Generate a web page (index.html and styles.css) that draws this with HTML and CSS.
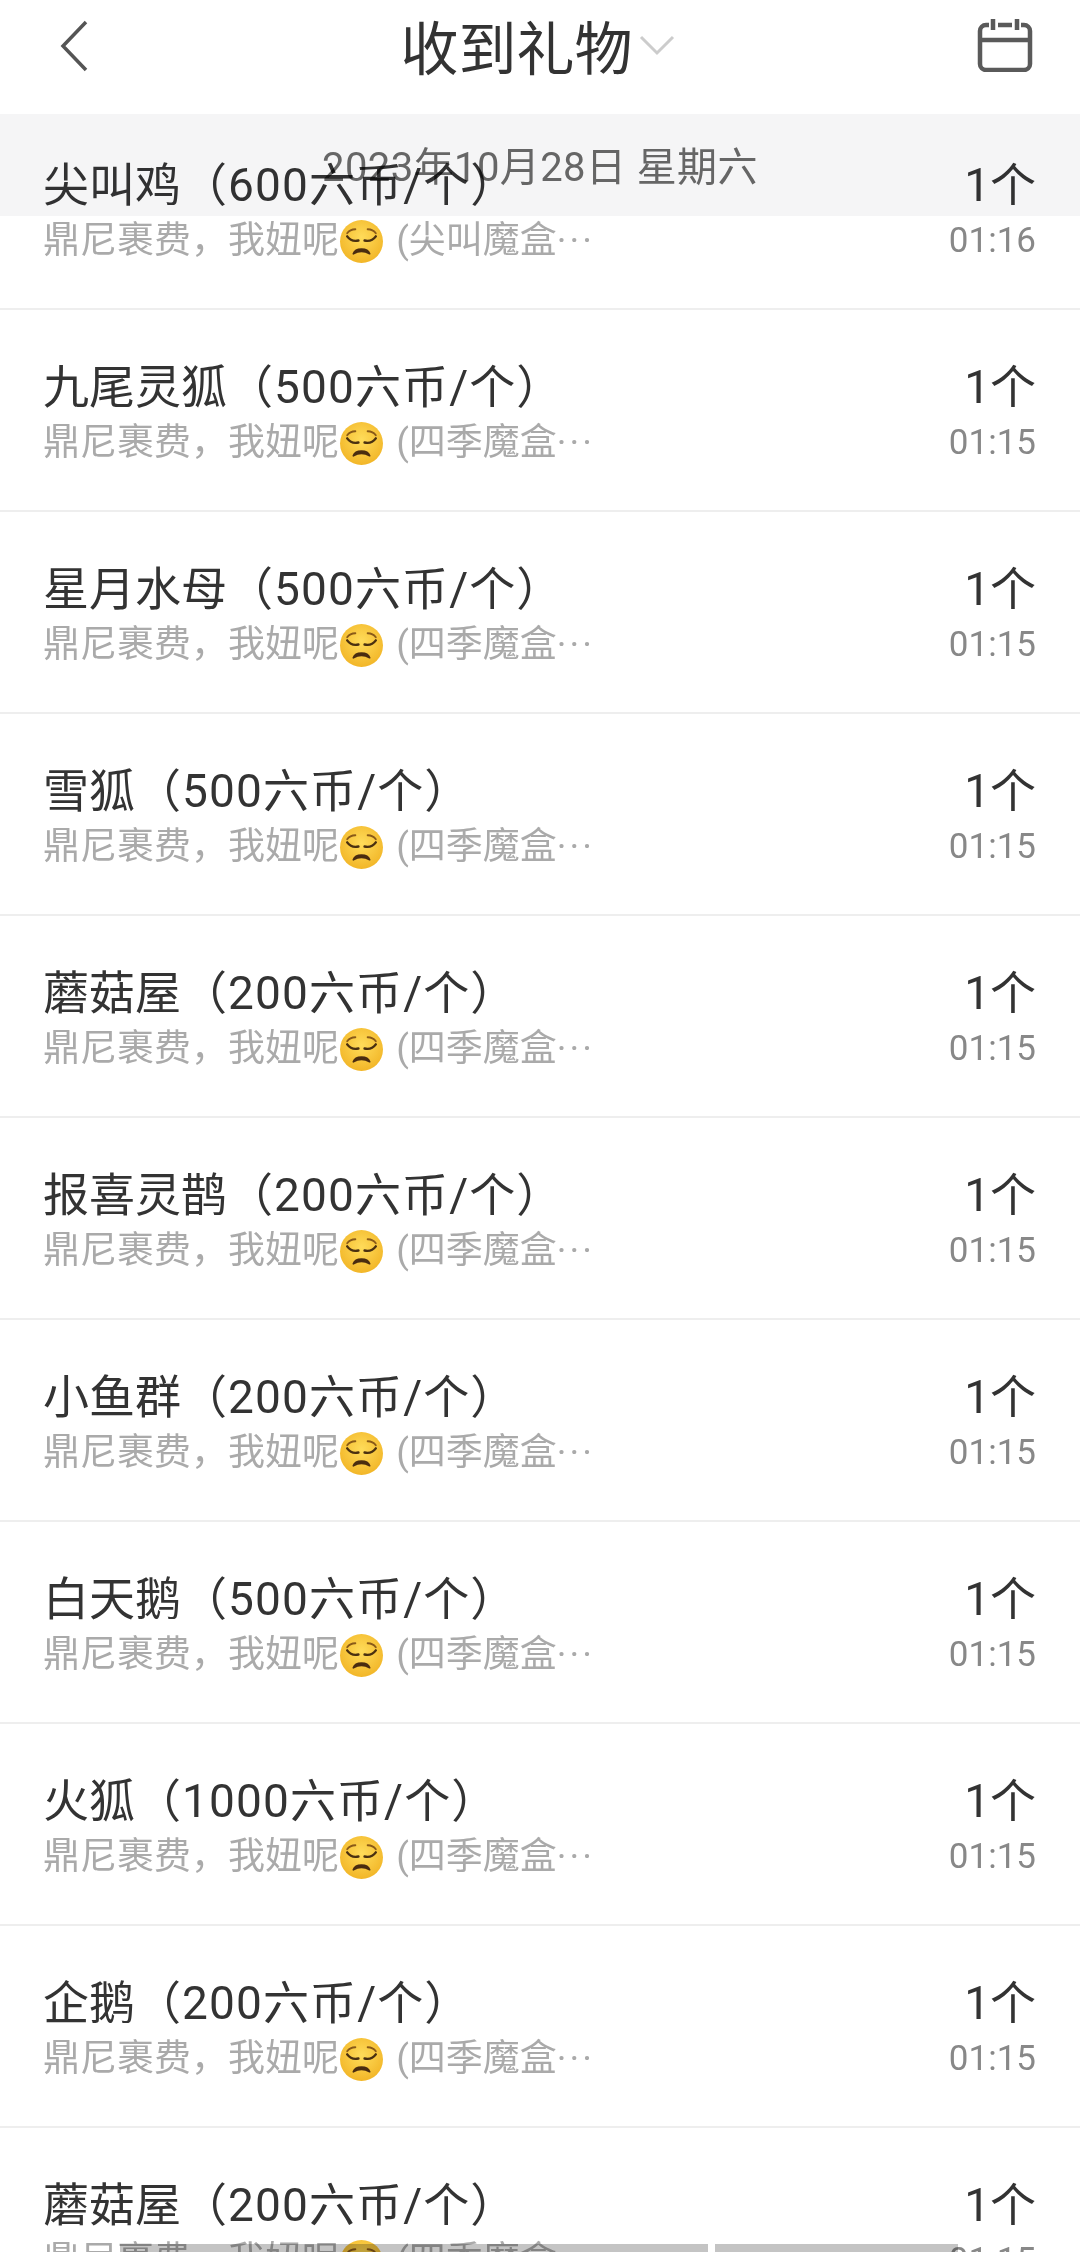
FILE: index.html
```html
<!DOCTYPE html>
<html lang="zh-CN">
<head>
    <meta charset="UTF-8">
    <meta name="viewport" content="width=device-width, initial-scale=1.0">
    <title>收到礼物</title>
    <link rel="stylesheet" href="styles.css">
</head>
<body>

<svg class="defs" width="0" height="0">
    <defs>
        <radialGradient id="faceFill" cx="50%" cy="40%" r="60%">
            <stop offset="0%" stop-color="#ffdc5a"/>
            <stop offset="100%" stop-color="#f2b628"/>
        </radialGradient>
        <symbol id="face" viewBox="0 0 44 44">
            <circle cx="22" cy="22" r="21" fill="url(#faceFill)"/>
            <path d="M8 14c2-3 5-4 8-4M36 14c-2-3-5-4-8-4" fill="none" stroke="#8a5a18" stroke-width="1.8" stroke-linecap="round"/>
            <path d="M8 17c3 4 7 5 11 4M36 17c-3 4-7 5-11 4" fill="none" stroke="#4a3010" stroke-width="2.4" stroke-linecap="round"/>
            <path d="M14 34c2-6 14-6 16 0c-5-3-11-3-16 0z" fill="#4a2c10" stroke="#4a2c10" stroke-width="1.6" stroke-linejoin="round"/>
        </symbol>
    </defs>
</svg>

<div class="page">
    <div class="header">
        <svg class="back" width="28" height="52" viewBox="0 0 28 52">
            <path d="M26 2L3 26l23 24" fill="none" stroke="#555" stroke-width="3.5"/>
        </svg>
        <div class="title">
            <span>收到礼物</span>
            <svg width="36" height="22" viewBox="0 0 36 22">
                <path d="M2 3l16 16L34 3" fill="none" stroke="#ccc" stroke-width="3"/>
            </svg>
        </div>
        <svg class="calendar" width="56" height="54" viewBox="0 0 56 54">
            <path d="M12 7H9a6 6 0 0 0-6 6v33a6 6 0 0 0 6 6h38a6 6 0 0 0 6-6V13a6 6 0 0 0-6-6h-3M21 7h14M3 22h50M16 1v11M40 1v11" fill="none" stroke="#5a5a5a" stroke-width="4.5"/>
        </svg>
    </div>

    <div class="date-band">2023年10月28日 星期六</div>

    <div class="list">
        <div class="row">
            <div class="info">
                <div class="name">尖叫鸡<span class="price">（600六币/个）</span></div>
                <div class="desc">鼎尼裹费，我妞呢<svg class="emoji"><use href="#face"/></svg> (尖叫魔盒<span class="dots">···</span></div>
            </div>
            <div class="meta">
                <div class="count">1个</div>
                <div class="time">01:16</div>
            </div>
        </div>
        <div class="row">
            <div class="info">
                <div class="name">九尾灵狐<span class="price">（500六币/个）</span></div>
                <div class="desc">鼎尼裹费，我妞呢<svg class="emoji"><use href="#face"/></svg> (四季魔盒<span class="dots">···</span></div>
            </div>
            <div class="meta">
                <div class="count">1个</div>
                <div class="time">01:15</div>
            </div>
        </div>
        <div class="row">
            <div class="info">
                <div class="name">星月水母<span class="price">（500六币/个）</span></div>
                <div class="desc">鼎尼裹费，我妞呢<svg class="emoji"><use href="#face"/></svg> (四季魔盒<span class="dots">···</span></div>
            </div>
            <div class="meta">
                <div class="count">1个</div>
                <div class="time">01:15</div>
            </div>
        </div>
        <div class="row">
            <div class="info">
                <div class="name">雪狐<span class="price">（500六币/个）</span></div>
                <div class="desc">鼎尼裹费，我妞呢<svg class="emoji"><use href="#face"/></svg> (四季魔盒<span class="dots">···</span></div>
            </div>
            <div class="meta">
                <div class="count">1个</div>
                <div class="time">01:15</div>
            </div>
        </div>
        <div class="row">
            <div class="info">
                <div class="name">蘑菇屋<span class="price">（200六币/个）</span></div>
                <div class="desc">鼎尼裹费，我妞呢<svg class="emoji"><use href="#face"/></svg> (四季魔盒<span class="dots">···</span></div>
            </div>
            <div class="meta">
                <div class="count">1个</div>
                <div class="time">01:15</div>
            </div>
        </div>
        <div class="row">
            <div class="info">
                <div class="name">报喜灵鹊<span class="price">（200六币/个）</span></div>
                <div class="desc">鼎尼裹费，我妞呢<svg class="emoji"><use href="#face"/></svg> (四季魔盒<span class="dots">···</span></div>
            </div>
            <div class="meta">
                <div class="count">1个</div>
                <div class="time">01:15</div>
            </div>
        </div>
        <div class="row">
            <div class="info">
                <div class="name">小鱼群<span class="price">（200六币/个）</span></div>
                <div class="desc">鼎尼裹费，我妞呢<svg class="emoji"><use href="#face"/></svg> (四季魔盒<span class="dots">···</span></div>
            </div>
            <div class="meta">
                <div class="count">1个</div>
                <div class="time">01:15</div>
            </div>
        </div>
        <div class="row">
            <div class="info">
                <div class="name">白天鹅<span class="price">（500六币/个）</span></div>
                <div class="desc">鼎尼裹费，我妞呢<svg class="emoji"><use href="#face"/></svg> (四季魔盒<span class="dots">···</span></div>
            </div>
            <div class="meta">
                <div class="count">1个</div>
                <div class="time">01:15</div>
            </div>
        </div>
        <div class="row">
            <div class="info">
                <div class="name">火狐<span class="price">（1000六币/个）</span></div>
                <div class="desc">鼎尼裹费，我妞呢<svg class="emoji"><use href="#face"/></svg> (四季魔盒<span class="dots">···</span></div>
            </div>
            <div class="meta">
                <div class="count">1个</div>
                <div class="time">01:15</div>
            </div>
        </div>
        <div class="row">
            <div class="info">
                <div class="name">企鹅<span class="price">（200六币/个）</span></div>
                <div class="desc">鼎尼裹费，我妞呢<svg class="emoji"><use href="#face"/></svg> (四季魔盒<span class="dots">···</span></div>
            </div>
            <div class="meta">
                <div class="count">1个</div>
                <div class="time">01:15</div>
            </div>
        </div>
        <div class="row">
            <div class="info">
                <div class="name">蘑菇屋<span class="price">（200六币/个）</span></div>
                <div class="desc">鼎尼裹费，我妞呢<svg class="emoji"><use href="#face"/></svg> (四季魔盒<span class="dots">···</span></div>
            </div>
            <div class="meta">
                <div class="count">1个</div>
                <div class="time">01:15</div>
            </div>
        </div>
    </div>

    <div class="crop-bars">
        <div class="crop-bar long"></div>
        <div class="crop-bar short"></div>
    </div>
</div>

</body>
</html>
```

FILE: styles.css
```css
html, body {
    margin: 0;
    padding: 0;
    background: white;
}
body {
    font-family: Roboto, "Noto Sans CJK SC", sans-serif;
    color: #333;
}
.defs {
    position: absolute;
}
.page {
    position: relative;
    width: 1080px;
    height: 2252px;
    overflow: hidden;
    background: white;
}
.header {
    position: relative;
    z-index: 1;
    height: 114px;
    padding: 0 47px 0 60px;
    box-sizing: border-box;
    display: flex;
    justify-content: space-between;
    align-items: flex-start;
    background: white;
}
.back {
    margin-top: 20px;
}
.calendar {
    margin-top: 18px;
}
.title {
    display: flex;
    align-items: center;
    gap: 6px;
    height: 90px;
    font-size: 58px;
    color: #333;
    margin-left: 10px;
}
.date-band {
    position: absolute;
    z-index: 2;
    left: 0;
    right: 0;
    top: 114px;
    height: 102px;
    padding-top: 27px;
    box-sizing: border-box;
    text-align: center;
    font-size: 40px;
    letter-spacing: 0.4px;
    line-height: 54px;
    color: #666;
    background: #f5f5f6;
    mix-blend-mode: multiply;
}
.list {
    margin-top: -6px;
}
.row {
    height: 202px;
    box-sizing: border-box;
    padding: 46px 44px 0 43px;
    display: flex;
    justify-content: space-between;
    border-bottom: 2px solid #eee;
}
.name {
    font-size: 46px;
    line-height: 62px;
}
.price {
    letter-spacing: 1.1px;
}
.desc {
    display: flex;
    align-items: center;
    font-size: 37px;
    line-height: 50px;
    color: #aaa;
    white-space: pre;
}
.emoji {
    width: 45px;
    height: 45px;
    flex: none;
    margin-right: 3px;
}
.dots {
    letter-spacing: 3px;
}
.meta {
    text-align: right;
}
.count {
    font-size: 46px;
    line-height: 62px;
}
.time {
    font-size: 35px;
    line-height: 50px;
    color: #888;
}
.crop-bars {
    position: absolute;
    z-index: 3;
    left: 120px;
    top: 2244px;
    display: flex;
    gap: 7px;
    mix-blend-mode: multiply;
}
.crop-bar {
    height: 8px;
    background: #c4c4c4;
}
.crop-bar.long {
    width: 588px;
}
.crop-bar.short {
    width: 243px;
}
```
